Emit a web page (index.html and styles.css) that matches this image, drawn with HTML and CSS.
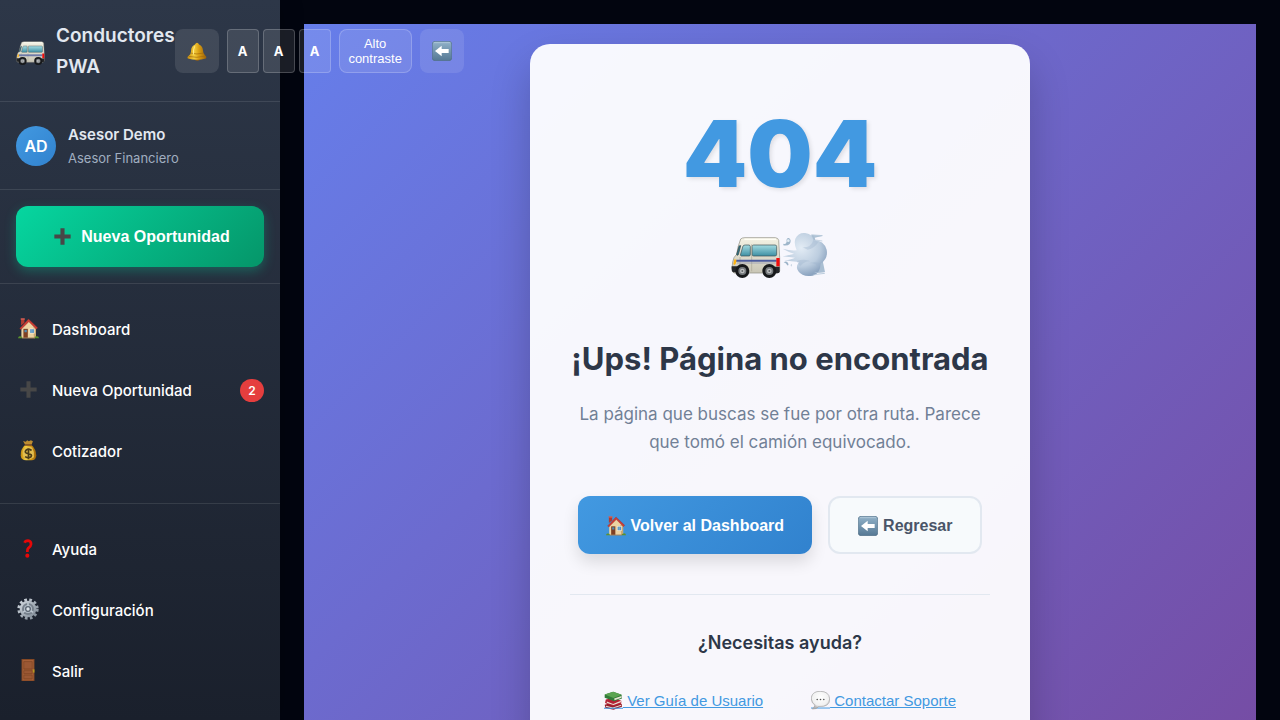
FILE: index.html
```html
<!DOCTYPE html>
<html lang="es">
<head>
<meta charset="utf-8">
<meta name="viewport" content="width=device-width, initial-scale=1">
<title>Conductores PWA</title>
<link rel="stylesheet" href="styles.css">
</head>
<body>
<svg class="sprite" aria-hidden="true">
  <defs>
    <linearGradient id="glass" x1="0" y1="0" x2="0" y2="1"><stop offset="0" stop-color="#a5dce2"/><stop offset="1" stop-color="#3d8fa3"/></linearGradient>
    <linearGradient id="shell" x1="0" y1="0" x2="0" y2="1"><stop offset="0" stop-color="#f4f2e4"/><stop offset="1" stop-color="#c9c6b6"/></linearGradient>
    <radialGradient id="puff" cx=".42" cy=".35" r=".65"><stop offset="0" stop-color="#e3ecf5"/><stop offset=".65" stop-color="#bccddf"/><stop offset="1" stop-color="#8ca4c0"/></radialGradient>
    <linearGradient id="gold" x1="0" y1="0" x2="1" y2="0"><stop offset="0" stop-color="#c58a0c"/><stop offset=".35" stop-color="#f5cf3f"/><stop offset=".6" stop-color="#d99f13"/><stop offset="1" stop-color="#99600a"/></linearGradient>
    <linearGradient id="tile" x1="0" y1="0" x2="0" y2="1"><stop offset="0" stop-color="#91b2c9"/><stop offset="1" stop-color="#557894"/></linearGradient>
    <linearGradient id="steel" x1="0" y1="0" x2="1" y2="1"><stop offset="0" stop-color="#d3dae1"/><stop offset="1" stop-color="#7d8894"/></linearGradient>
    <radialGradient id="cloud" cx=".5" cy=".35" r=".6"><stop offset="0" stop-color="#fff"/><stop offset=".75" stop-color="#f1f1f1"/><stop offset="1" stop-color="#b5b5b5"/></radialGradient>
  </defs>
  <symbol id="van" viewBox="0 0 150 126">
    <path d="M29 6Q33 2 42 2H133Q142 3 143 10L146 62V101Q146 108 138 108H10Q2 106 3 95L5 75Q7 60 17 52Q20 28 29 6Z" fill="url(#shell)" stroke="#8d8b7e" stroke-width="2"/>
    <path d="M40 7H135" stroke="#fffef4" stroke-width="4"/>
    <path d="M24 28Q26 25 29 26L22 53Q17 57 17 52Z" fill="#2f7e91" stroke="#313d41" stroke-width="2"/>
    <path d="M36 27Q38 24 43 24H54Q58 25 58 29V53Q58 57 54 57H31Q27 56 29 51Z" fill="url(#glass)" stroke="#3a4d52" stroke-width="2"/>
    <rect x="63" y="24" width="74" height="33" rx="5" fill="url(#glass)" stroke="#3a4d52" stroke-width="2"/>
    <path d="M62 22V103M27 60V91" stroke="#aaa796" stroke-width="2"/>
    <path d="M16 68H137V74H14Z" fill="#4b5b9e"/><path d="M18 78H134" stroke="#8b91b4" stroke-width="2"/>
    <path d="M10 67L16 68Q17 80 10 84L7 81Z" fill="#ffb414"/>
    <path d="M136 63H146V88H136Z" fill="#f20c0c"/>
    <path d="M2 88H19V106H6Q1 103 2 88ZM130 89H146V105Q143 110 132 108Z" fill="#242629"/>
    <circle cx="34" cy="102" r="21" fill="#17191b"/><circle cx="34" cy="102" r="12" fill="#777b7e"/><circle cx="34" cy="102" r="7" fill="#bfc1c2"/><circle cx="34" cy="102" r="3" fill="#646769"/>
    <circle cx="115" cy="102" r="21" fill="#17191b"/><circle cx="115" cy="102" r="12" fill="#777b7e"/><circle cx="115" cy="102" r="7" fill="#bfc1c2"/><circle cx="115" cy="102" r="3" fill="#646769"/>
  </symbol>
  <symbol id="dash" viewBox="0 0 144 138">
    <path d="M58 59L92 9L126 11L101 17L125 86L132 120L92 125L60 92L45 79L48 70Z" fill="#a9bed2"/>
    <path d="M5 50Q28 57 47 55Q38 35 43 20Q52 1 72 3Q93 5 97 23Q129 25 137 53Q142 80 119 95Q118 124 95 131Q65 136 52 118Q42 104 55 90Q31 89 10 85Q34 82 42 77Q26 75 5 73Q31 68 39 65Q24 61 5 50Z" fill="url(#puff)"/>
    <path d="M65 46Q91 47 97 24Q104 25 112 30Q101 49 80 53ZM112 107Q107 93 85 94Q100 87 119 95ZM47 87Q73 79 88 88Q71 87 57 103Z" fill="#9bb2ca" opacity=".35"/>
    <path d="M91 8L124 11L99 14M101 121L131 124L96 129M104 24L124 27" fill="none" stroke="#b0c4d7" stroke-width="2"/>
    <path d="M7 35Q15 38 17 29Q15 17 24 18Q33 24 26 36Q20 42 7 40Z" fill="#9eb6ca"/><circle cx="22" cy="26" r="4" fill="#e3edf5"/>
    <path d="M8 91Q18 85 22 95Q24 101 19 100Q15 93 8 91ZM29 99L32 96L31 104Z" fill="#9db4c9"/>
  </symbol>
  <symbol id="bell" viewBox="0 0 60 58">
    <circle cx="30" cy="7" r="5" fill="#e1ad27"/>
    <ellipse cx="31" cy="51" rx="8" ry="6" fill="#9f620b"/>
    <path d="M25 7Q11 14 12 27Q12 38 4 43Q-1 47 2 50Q29 58 57 50Q61 46 55 41Q48 36 48 24Q47 12 35 7Z" fill="url(#gold)"/>
    <path d="M12 34Q29 39 49 34M5 44Q28 50 55 43" fill="none" stroke="#a36809" stroke-width="2"/>
    <path d="M23 13Q18 22 19 38" fill="none" stroke="#ffee8a" stroke-width="3"/>
  </symbol>
  <symbol id="left" viewBox="0 0 60 60">
    <rect x="1" y="1" width="58" height="58" rx="8" fill="url(#tile)" stroke="#527087" stroke-width="2"/>
    <path d="M5 5H55" stroke="#bcd2df" stroke-width="2"/>
    <path d="M9 30L29 14V24H50V36H29V46Z" fill="#fff"/>
  </symbol>
  <symbol id="plus" viewBox="0 0 50 50"><path d="M19 1H31V19H49V31H31V49H19V31H1V19H19Z" fill="#474747"/></symbol>
  <symbol id="house" viewBox="0 0 62 62">
    <path d="M10 29L32 9L53 29V59H10Z" fill="#ecd3a2"/><path d="M45 27L53 30V59H47Z" fill="#c9a873"/>
    <path d="M9 2H19V14L9 22Z" fill="#af3b31"/><path d="M8 1H20V5H8Z" fill="#d96257"/>
    <path d="M5 31L31 3L58 29L54 33L32 11L9 34Z" fill="#ca3e35" stroke="#9a2928"/>
    <rect x="16" y="32" width="13" height="27" fill="#7e4023"/><rect x="19" y="35" width="7" height="7" fill="#4d8ab4"/>
    <rect x="34" y="31" width="15" height="15" fill="#f7ead2"/><rect x="36" y="33" width="11" height="11" fill="#5795c6"/><path d="M41 33V44" stroke="#d8e5e8"/>
    <path d="M0 60Q1 53 6 54Q11 53 13 60ZM48 60Q50 53 55 54Q61 52 62 60Z" fill="#5b922d"/><path d="M12 59H50" stroke="#a3835b" stroke-width="3"/>
  </symbol>
  <symbol id="money" viewBox="0 0 48 62">
    <path d="M14 14L8 3L16 5L20 1L25 4L31 1L37 4L33 14Z" fill="#bd8c30"/>
    <path d="M14 15Q0 27 1 46Q2 60 17 60H33Q47 59 47 45Q46 27 33 15Z" fill="url(#gold)"/>
    <path d="M8 29Q4 47 14 56Q29 60 40 51Q43 37 35 23Q24 15 8 29Z" fill="#e3be50"/>
    <path d="M13 15H34" stroke="#7c4821" stroke-width="4"/>
    <path d="M33 31Q25 24 17 30Q10 38 23 40Q37 43 31 50Q24 56 14 49M24 24V57" fill="none" stroke="#4b3b18" stroke-width="5"/>
  </symbol>
  <symbol id="question" viewBox="0 0 28 56"><path d="M4 11Q6 5 14 5Q23 6 23 15Q22 22 17 25Q12 28 12 38" fill="none" stroke="#e60707" stroke-width="8"/><circle cx="12" cy="49" r="6" fill="#e60707"/></symbol>
  <symbol id="gear" viewBox="0 0 66 66">
    <circle cx="33" cy="33" r="28" fill="none" stroke="url(#steel)" stroke-width="8" stroke-dasharray="8 7"/>
    <circle cx="33" cy="33" r="25" fill="url(#steel)"/><circle cx="33" cy="33" r="18" fill="#77818c"/>
    <circle cx="33" cy="33" r="12" fill="#b3bdc8"/><circle cx="33" cy="33" r="9" fill="#5a6572"/><circle cx="33" cy="33" r="5" fill="#dce3e9"/>
    <path d="M33 15V24M18 43L25 38M48 43L41 38" stroke="#bdc7d0" stroke-width="5"/>
  </symbol>
  <symbol id="door" viewBox="0 0 40 68">
    <path d="M0 0H40V68H0Z" fill="#854824"/><path d="M3 3H37V66H3Z" fill="#a66038"/>
    <path d="M7 8H33V31H7ZM7 36H33V45H7ZM7 50H33V61H7Z" fill="#9b5834" stroke="#7d4523" stroke-width="2"/>
    <path d="M7 32H33M7 47H33M7 62H33" stroke="#8a4c28" stroke-width="2"/><path d="M35 32H40V42H35Z" fill="#b69a20"/>
  </symbol>
  <symbol id="books" viewBox="0 0 54 54">
    <path d="M2 39L28 31L51 38L51 45L27 53L4 48Z" fill="#991e2b"/><path d="M6 42L25 47L49 39V42L25 50L5 45Z" fill="#e8e4d7"/>
    <path d="M5 24L28 19L49 28L49 36L26 43L3 34Z" fill="#b42135"/><path d="M8 30L26 37L48 28V32L27 40L8 34Z" fill="#e9e2d4"/>
    <path d="M2 10L26 2L50 11L51 21L29 29L2 19Z" fill="#327b39"/><path d="M2 10L26 2L50 11L27 20Z" fill="#5ba451"/>
    <path d="M29 21L50 14V19L30 26Z" fill="#e6e4d1"/><path d="M0 49H54" stroke="#4299e1" stroke-width="3"/>
  </symbol>
  <symbol id="bubble" viewBox="0 0 58 58">
    <path d="M0 52H58" stroke="#4299e1" stroke-width="3"/>
    <path d="M28 1C8 1 1 12 1 24Q2 38 12 43Q11 50 4 55Q17 56 24 47Q57 50 57 24Q55 1 28 1Z" fill="url(#cloud)" stroke="#9d9d9d" stroke-width="2"/>
    <circle cx="19" cy="26" r="2.5" fill="#555"/><circle cx="29" cy="26" r="2.5" fill="#555"/><circle cx="39" cy="26" r="2.5" fill="#555"/>
  </symbol>
</svg>
<div class="app">
  <aside class="sidebar">
    <header class="brand-bar">
      <div class="brand"><svg class="brand-icon"><use href="#van"/></svg><span class="brand-name">Conductores PWA</span></div>
      <div class="tools">
        <button class="tool" type="button" aria-label="Notificaciones"><svg class="bell-icon"><use href="#bell"/></svg></button>
        <div class="sizes">
          <button class="size" type="button" aria-label="Texto pequeño">A</button>
          <button class="size" type="button" aria-label="Texto normal">A</button>
          <button class="size" type="button" aria-label="Texto grande">A</button>
        </div>
        <button class="contrast" type="button">Alto contraste</button>
        <button class="tool" type="button" aria-label="Contraer menú"><svg class="arrow-icon"><use href="#left"/></svg></button>
      </div>
    </header>
    <section class="profile">
      <div class="avatar">AD</div>
      <div class="person"><span class="person-name">Asesor Demo</span><span class="person-role">Asesor Financiero</span></div>
    </section>
    <div class="cta-area"><button class="cta" type="button"><svg class="plus-icon"><use href="#plus"/></svg>Nueva Oportunidad</button></div>
    <nav class="menu" aria-label="Principal">
      <a class="item" href="#"><span class="slot"><svg class="icon"><use href="#house"/></svg></span>Dashboard</a>
      <a class="item" href="#"><span class="slot"><svg class="plus-icon"><use href="#plus"/></svg></span>Nueva Oportunidad<span class="badge">2</span></a>
      <a class="item" href="#"><span class="slot"><svg class="icon"><use href="#money"/></svg></span>Cotizador</a>
    </nav>
    <nav class="menu menu-footer" aria-label="Cuenta">
      <a class="item" href="#"><span class="slot"><svg class="question-icon"><use href="#question"/></svg></span>Ayuda</a>
      <a class="item" href="#"><span class="slot"><svg class="gear-icon"><use href="#gear"/></svg></span>Configuración</a>
      <a class="item" href="#"><span class="slot"><svg class="gear-icon"><use href="#door"/></svg></span>Salir</a>
    </nav>
  </aside>
  <main class="content">
    <div class="stage">
      <article class="card">
        <div class="code">404</div>
        <div class="scene"><svg class="scene-van"><use href="#van"/></svg><svg class="scene-dash"><use href="#dash"/></svg></div>
        <h1 class="title">¡Ups! Página no encontrada</h1>
        <p class="message">La página que buscas se fue por otra ruta. Parece que tomó el camión equivocado.</p>
        <div class="actions">
          <button class="btn btn-primary" type="button"><svg class="arrow-icon"><use href="#house"/></svg>Volver al Dashboard</button>
          <button class="btn btn-secondary" type="button"><svg class="arrow-icon"><use href="#left"/></svg>Regresar</button>
        </div>
        <section class="help">
          <h2 class="help-title">¿Necesitas ayuda?</h2>
          <div class="links">
            <a class="link" href="#"><svg class="link-icon"><use href="#books"/></svg> Ver Guía de Usuario</a>
            <a class="link" href="#"><svg class="link-icon"><use href="#bubble"/></svg> Contactar Soporte</a>
          </div>
        </section>
      </article>
    </div>
  </main>
</div>
</body>
</html>
```
FILE: styles.css
```css
* { box-sizing: border-box; }
body { margin: 0; background: #02050f; color: #2d3748; font-family: Inter, "Liberation Sans", sans-serif; }
button { font-family: "Liberation Sans", Arial, sans-serif; cursor: pointer; }
svg { display: block; flex: none; }
.sprite { position: absolute; width: 0; height: 0; }
.app { display: grid; grid-template-columns: 280px 1fr; min-height: 100vh; }

.sidebar {
  position: sticky; top: 0; z-index: 2; height: 100vh;
  background: linear-gradient(180deg, #2d3748, #1a202c);
  box-shadow: 4px 0 20px rgba(0, 0, 0, .15);
  color: #fff;
}
.brand-bar { display: flex; align-items: center; padding: 20px 16px 19px; border-bottom: 1px solid rgba(255, 255, 255, .1); }
.brand { display: flex; align-items: center; gap: 11px; }
.brand-icon { width: 29px; height: 25px; margin-top: 4px; }
.brand-name { width: min-content; font-size: 19px; line-height: 31px; font-weight: 600; color: #e2e8f0; }
.tools { display: flex; flex: none; gap: 8px; }
.sizes { display: flex; gap: 4px; }
.tool, .size, .contrast { height: 44px; padding: 0; color: #fff; background: rgba(255, 255, 255, .1); border: 0; border-radius: 8px; }
.tool { display: grid; place-items: center; width: 44px; }
.size { width: 32px; border: 1px solid rgba(255, 255, 255, .2); border-radius: 4px; font-family: Inter, sans-serif; font-size: 13px; font-weight: 700; }
.contrast { width: 73px; padding: 0 8px; border: 1px solid rgba(255, 255, 255, .2); font-size: 13px; line-height: 15px; }
.bell-icon { width: 20px; height: 19px; }
.arrow-icon { width: 20px; height: 20px; }

.profile { display: flex; align-items: center; gap: 12px; padding: 20px 16px; border-bottom: 1px solid rgba(255, 255, 255, .1); }
.avatar { display: grid; place-items: center; width: 40px; height: 40px; border-radius: 50%; background: linear-gradient(135deg, #4299e1, #3182ce); font-size: 16px; font-weight: 600; }
.person { display: flex; flex-direction: column; }
.person-name { font-size: 15px; line-height: 26px; font-weight: 600; color: #e2e8f0; }
.person-role { font-size: 13px; line-height: 21px; color: #a0aec0; }

.cta-area { padding: 16px; border-bottom: 1px solid rgba(255, 255, 255, .1); }
.cta {
  display: flex; align-items: center; justify-content: center; gap: 10px;
  width: 100%; height: 61px; padding: 0 8px 0 12px; border: 0; border-radius: 12px;
  background: linear-gradient(135deg, #06d6a0, #059669); color: #fff;
  box-shadow: 0 4px 12px rgba(6, 214, 160, .3);
  font-size: 16px; font-weight: 700;
}
.plus-icon { width: 17px; height: 17px; }

.menu { display: flex; flex-direction: column; gap: 3px; padding: 16px 0 23px; }
.menu-footer { border-top: 1px solid rgba(255, 255, 255, .1); }
.item { display: flex; align-items: center; gap: 12px; height: 58px; padding: 0 16px; color: #fff; font-size: 15px; font-weight: 500; text-decoration: none; }
.slot { display: grid; place-items: center; width: 24px; height: 30px; padding-bottom: 2px; }
.icon { width: 21px; height: 21px; }
.question-icon { width: 10px; height: 19px; }
.gear-icon { width: 22px; height: 22px; }
.badge { display: grid; place-items: center; width: 24px; height: 23px; margin-left: auto; border-radius: 12px; background: #e53e3e; font-size: 12px; font-weight: 600; }

.content { padding: 24px; }
.stage { display: flex; justify-content: center; padding: 20px; background: linear-gradient(135deg, #667eea, #764ba2); }
.card {
  width: 100%; max-width: 500px; padding: 60px 40px; border-radius: 20px;
  background: rgba(255, 255, 255, .95); box-shadow: 0 20px 40px rgba(0, 0, 0, .2);
  text-align: center;
}
.code { font-size: 92px; line-height: 100px; font-weight: 900; color: #4299e1; text-shadow: 2px 2px 4px rgba(0, 0, 0, .1); }
.scene { display: flex; align-items: center; justify-content: center; height: 77px; margin: 12px 0 40px; }
.scene-van { width: 50px; height: 42px; margin-top: 6px; }
.scene-dash { width: 48px; height: 46px; }
.title { margin: 0 0 16px; font-size: 31px; line-height: 51px; font-weight: 700; }
.message { margin: 0 0 40px; font-size: 17px; line-height: 28px; color: #718096; }
.actions { display: flex; flex-wrap: wrap; justify-content: center; gap: 16px; margin-bottom: 40px; }
.btn { display: flex; align-items: center; gap: 5px; height: 58px; padding: 2px 28px 0; border: 0; border-radius: 12px; font-size: 16px; font-weight: 700; }
.btn-primary { background: linear-gradient(135deg, #4299e1, #3182ce); color: #fff; box-shadow: 0 8px 16px rgba(0, 0, 0, .12); }
.btn-secondary { border: 2px solid #e2e8f0; background: #f7fafc; color: #4a5568; }
.help { padding-top: 32px; border-top: 1px solid #e2e8f0; }
.help-title { margin: 0 0 31px; font-size: 18px; line-height: 31px; font-weight: 600; }
.links { display: flex; flex-wrap: wrap; justify-content: center; gap: 16px 48px; }
.link { font-family: "Liberation Sans", Arial, sans-serif; font-size: 15px; line-height: 24px; color: #4299e1; text-underline-offset: 1px; }
.link-icon { display: inline-block; width: 19px; height: 19px; vertical-align: -4px; }
```
